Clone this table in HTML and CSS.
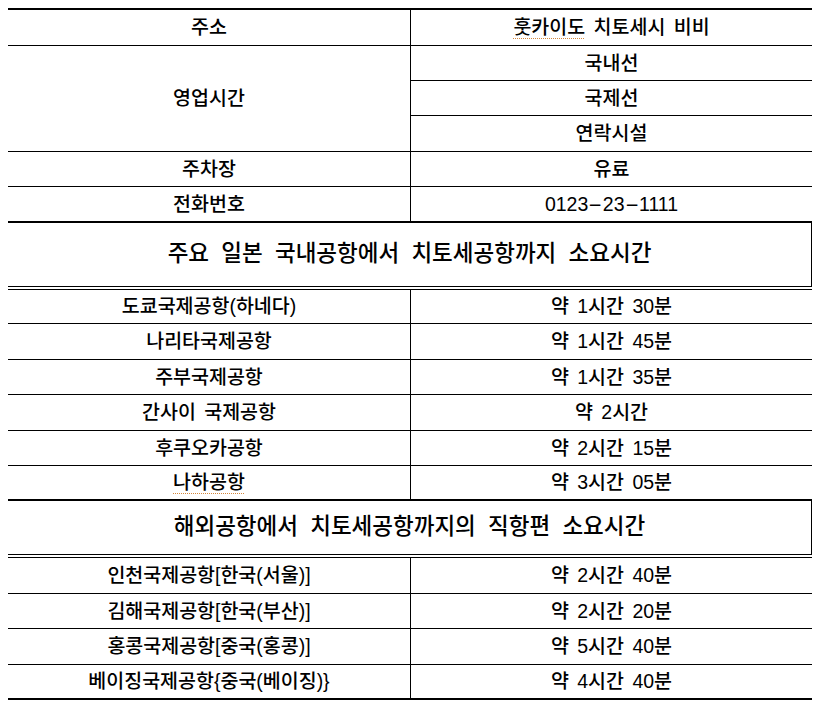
FILE: index.html
```html
<!DOCTYPE html>
<html lang="ko">
<head>
<meta charset="utf-8">
<title>치토세공항 안내</title>
<link rel="stylesheet" href="styles.css">
</head>
<body>
<div class="doc">
  <div class="grid t1">
    <div class="cell left"><span>주소</span></div>
    <div class="cell right"><span><span class="spell">훗카이도</span> 치토세시 비비</span></div>
    <div class="cell left span3">영업시간</div>
    <div class="cell right">국내선</div>
    <div class="cell right">국제선</div>
    <div class="cell right">연락시설</div>
    <div class="cell left">주차장</div>
    <div class="cell right">유료</div>
    <div class="cell left nob">전화번호</div>
    <div class="cell right nob"><span class="tel">0123<span class="dash">-</span>23<span class="dash">-</span>1111</span></div>
  </div>

  <div class="section s1">주요 일본 국내공항에서 치토세공항까지 소요시간</div>

  <div class="grid t2">
    <div class="cell left">도쿄국제공항(하네다)</div>
    <div class="cell right">약 1시간 30분</div>
    <div class="cell left">나리타국제공항</div>
    <div class="cell right">약 1시간 45분</div>
    <div class="cell left">주부국제공항</div>
    <div class="cell right">약 1시간 35분</div>
    <div class="cell left">간사이 국제공항</div>
    <div class="cell right">약 2시간</div>
    <div class="cell left">후쿠오카공항</div>
    <div class="cell right">약 2시간 15분</div>
    <div class="cell left nob"><span class="spell">나하공항</span></div>
    <div class="cell right nob">약 3시간 05분</div>
  </div>

  <div class="section s2">해외공항에서 치토세공항까지의 직항편 소요시간</div>

  <div class="grid t3">
    <div class="cell left">인천국제공항[한국(서울)]</div>
    <div class="cell right">약 2시간 40분</div>
    <div class="cell left">김해국제공항[한국(부산)]</div>
    <div class="cell right">약 2시간 20분</div>
    <div class="cell left">홍콩국제공항[중국(홍콩)]</div>
    <div class="cell right">약 5시간 40분</div>
    <div class="cell left nob">베이징국제공항{중국(베이징)}</div>
    <div class="cell right nob">약 4시간 40분</div>
  </div>
</div>
</body>
</html>
```
FILE: styles.css
```css
html, body {
  margin: 0;
  padding: 0;
  background: #ffffff;
}

body {
  font-family: "Liberation Sans", "Noto Sans CJK KR", sans-serif;
  color: #000000;
}

.doc {
  width: 804px;
  margin: 8px 0 0 8px;
  display: flex;
  flex-direction: column;
}

.grid {
  display: grid;
  grid-template-columns: 403px 401px;
  border-bottom: 2px solid #000;
}

.t1 {
  border-top: 2px solid #000;
  grid-template-rows: 36px 35px 35px 36px 35px 34px;
}

.t2 {
  border-top: 1px solid #000;
  grid-template-rows: 34px 36px 35px 36px 35px 33px;
}

.t3 {
  border-top: 1px solid #000;
  grid-template-rows: 36px 35px 36px 33px;
}

.cell {
  box-sizing: border-box;
  display: flex;
  align-items: center;
  justify-content: center;
  font-size: 19.5px;
  font-weight: 500;
  line-height: 1;
  word-spacing: 3px;
  border-bottom: 1px solid #000;
  white-space: nowrap;
  padding-top: 1px;
}

.left {
  border-right: 1px solid #000;
}

.span3 {
  grid-row: span 3;
}

.nob {
  border-bottom: none;
}

.spell {
  text-decoration: underline dotted #d4873c;
  text-decoration-thickness: 1px;
  text-underline-offset: 4px;
}

.tel .dash {
  display: inline-block;
  transform: scaleX(2.2);
  margin: 0 4px;
}

.section {
  box-sizing: border-box;
  display: flex;
  align-items: center;
  justify-content: center;
  font-size: 22.5px;
  font-weight: 500;
  line-height: 1;
  word-spacing: 6px;
  border-right: 1px solid #000;
  border-bottom: 1px solid #000;
  margin-bottom: 2px;
  white-space: nowrap;
}

.s1 {
  height: 64px;
}

.s2 {
  height: 54px;
}
```
